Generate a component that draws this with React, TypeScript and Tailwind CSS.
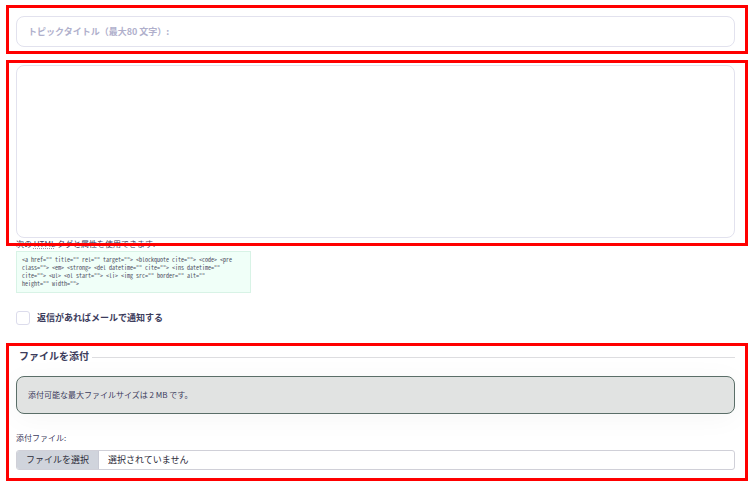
import React, { useState } from 'react';

const allowedTags = [
  '<a href="" title="" rel="" target=""> <blockquote cite=""> <code> <pre',
  'class=""> <em> <strong> <del datetime="" cite=""> <ins datetime=""',
  'cite=""> <ul> <ol start=""> <li> <img src="" border="" alt=""',
  'height="" width="">'
];

const App = () => {
  const [title, setTitle] = useState('');
  const [content, setContent] = useState('');
  const [notify, setNotify] = useState(false);
  const [fileName, setFileName] = useState('');

  const handleFile = (e: React.ChangeEvent<HTMLInputElement>) => {
    setFileName(e.target.files?.[0]?.name ?? '');
  };

  return (
    <form className="bg-white pt-[5px] pr-[2px] pl-[6px] font-['Noto_Sans_CJK_JP',sans-serif] text-[#3c3c5c]">
      <div className="border-3 border-[#ff0000] pt-2 pr-[10px] pb-1 pl-[7px]">
        <input
          type="text"
          aria-label="トピックタイトル"
          maxLength={80}
          value={title}
          onChange={(e) => setTitle(e.target.value)}
          placeholder="トピックタイトル（最大80 文字）:"
          className="block h-[31px] w-full rounded-lg border border-[#e2e2ee] px-[11px] text-[9px] font-bold outline-none placeholder:text-[#b0b0cc]"
        />
      </div>

      <div className="relative z-10 mt-[6px] border-3 border-[#ff0000] pt-[2px] pr-[10px] pb-[5px] pl-[7px]">
        <textarea
          aria-label="本文"
          value={content}
          onChange={(e) => setContent(e.target.value)}
          className="block h-[173px] w-full resize-none rounded-lg border border-[#e2e2ee] p-3 text-[9px] outline-none"
        />
      </div>

      <div className="-mt-2 pl-[10px]">
        <p className="text-[8px] leading-3">
          次の <abbr title="HyperText Markup Language" className="underline decoration-[#9c9cb0] decoration-dotted">HTML</abbr> タグと属性を使用できます:
        </p>
        <code className="mt-px block w-[235px] border border-[#d8f3e6] bg-[#f0fff8] px-[5px] py-1 font-['Noto_Sans_Mono_CJK_JP','Liberation_Mono',monospace] text-[6px] leading-[8px] whitespace-nowrap text-[#4c4c60]">
          {allowedTags.map((line) => (
            <span key={line} className="block">{line}</span>
          ))}
        </code>
        <label className="mt-[17px] flex items-center gap-[7px] text-[9px] leading-4 font-bold">
          <input
            type="checkbox"
            checked={notify}
            onChange={(e) => setNotify(e.target.checked)}
            className="h-[14px] w-[14px] appearance-none rounded-[3px] border border-[#dcdcec] checked:bg-[#3c3c5c]"
          />
          返信があればメールで通知する
        </label>
      </div>

      <fieldset className="mt-[17px] border-3 border-[#ff0000] pt-[2px] pr-[10px] pb-2 pl-[7px]">
        <div className="flex items-center gap-[3px] pl-[3px]">
          <h3 className="text-[10px] leading-4 font-bold">ファイルを添付</h3>
          <div className="mt-[2px] h-px flex-1 bg-[#dddde0]"></div>
        </div>
        <p className="mt-3 rounded-lg border border-[#5a6e68] bg-[#e1e3e2] px-[11px] py-3 text-[8px] leading-3 shadow-[0_4px_28px_rgba(0,0,0,0.04)]">
          添付可能な最大ファイルサイズは 2 MB です。
        </p>
        <label htmlFor="attachment" className="mt-[18px] block text-[8px] leading-3">添付ファイル:</label>
        <label
          htmlFor="attachment"
          className="mt-[6px] flex h-5 items-stretch overflow-hidden rounded-[3px] border border-[#d0d0d8] bg-white text-[9px] leading-[18px] text-[#2c2c38]"
        >
          <span className="border-r border-[#c8cad4] bg-[#d0d4dc] px-[9px]">ファイルを選択</span>
          <span className="px-[9px]">{fileName || '選択されていません'}</span>
          <input id="attachment" type="file" onChange={handleFile} className="sr-only" />
        </label>
      </fieldset>
    </form>
  );
};

export default App;
